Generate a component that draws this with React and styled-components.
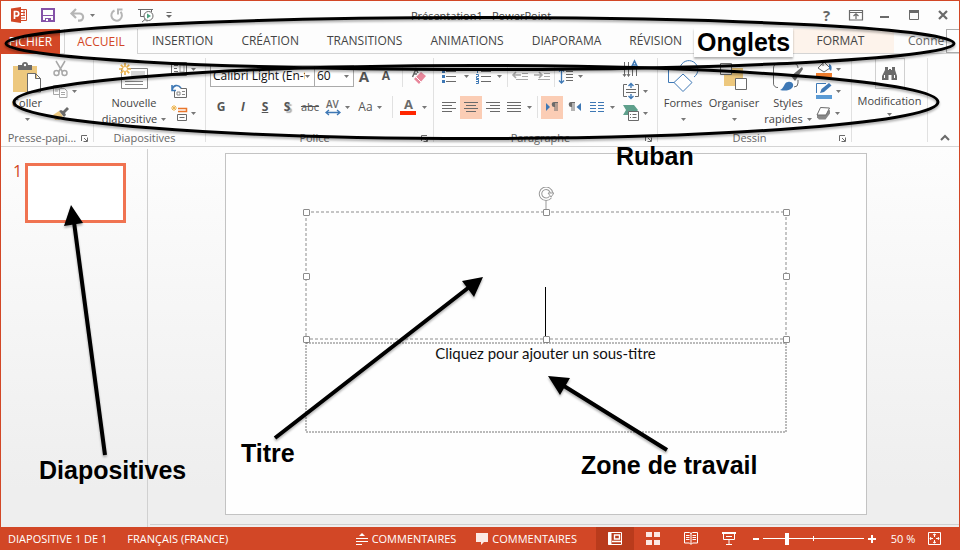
import React from "react";
import styled, { createGlobalStyle, css } from "styled-components";

const RED = "#d24726";
const GREY = "#6a6a6a";
const BLUE = "#3e78b5";

const GlobalStyle = createGlobalStyle`
  *, *::before, *::after { box-sizing: border-box; }
  body { margin: 0; font-family: "Open Sans", "Noto Sans", sans-serif; font-size: 11px; line-height: 16px; color: #444; }
  button, input, select { font: inherit; color: inherit; }
`;

const Window = styled.div`
  position: relative;
  display: flex;
  flex-direction: column;
  min-height: 100vh;
  border: 1px solid ${RED};
  border-bottom: 0;
  background: #fdfdfd;
  overflow: hidden;
`;

const reset = css`
  border: 0;
  padding: 0;
  background: none;
  display: inline-flex;
  align-items: center;
  justify-content: center;
`;

const TitleBar = styled.header`
  display: grid;
  grid-template-columns: 1fr auto 1fr;
  align-items: center;
  height: 28px;
  padding: 0 8px 0 10px;
`;
const Title = styled.h1`
  margin: 0;
  padding-top: 2px;
  font: inherit;
`;
const QuickAccess = styled.div`
  display: flex;
  align-items: center;
`;
const QuickButton = styled.button`
  ${reset}
  width: ${(p) => p.$w || 16}px;
  height: 20px;
  margin-right: ${(p) => p.$after || 0}px;
`;
const WindowControls = styled.div`
  display: flex;
  justify-content: flex-end;
  gap: 12px;
`;
const ControlButton = styled.button`
  ${reset}
  width: 17px;
  height: 20px;
  font-size: 15px;
  font-weight: 700;
  color: #666;
`;

const TabBar = styled.nav`
  display: flex;
  height: 25px;
  border-bottom: 1px solid #d4d4d4;
  font-size: 12px;
`;
const Tab = styled.button`
  ${reset}
  height: 24px;
  margin-right: ${(p) => p.$after ?? 16}px;
  padding: 0 6px;
  white-space: nowrap;
`;
const FileTab = styled(Tab)`
  width: 59px;
  height: 25px;
  color: #fff;
  background: ${RED};
`;
const ActiveTab = styled(Tab)`
  width: 74px;
  height: 25px;
  color: ${RED};
  background: #fdfdfd;
  border: 1px solid #d4d4d4;
  border-width: 0 1px;
`;
const ContextTab = styled(Tab)`
  width: 107px;
  margin-left: auto;
  background: #fdf3eb;
`;
const SignIn = styled.a`
  display: flex;
  align-items: center;
  width: 38px;
  color: #666;
  text-decoration: none;
`;
const Avatar = styled.button`
  ${reset}
  width: 13px;
  border: 1px solid #ababab;
  border-right: 0;
  background: #fdfdfd;
`;

const Ribbon = styled.section`
  display: grid;
  grid-template-columns: 93px 112px 228px 224px 194px 76px 1fr;
  height: 93px;
  padding: 4px 0;
  border-bottom: 1px solid #d4d4d4;
`;
const Group = styled.div`
  display: flex;
  flex-direction: column;
  min-width: 0;
  border-right: 1px solid #e1e1e1;
`;
const GroupBody = styled.div`
  display: flex;
  flex: 1;
  padding: 0 ${(p) => p.$pad || 4}px;
  gap: ${(p) => p.$gap || 0}px;
`;
const GroupFooter = styled.div`
  display: grid;
  grid-template-columns: 1fr 14px;
  align-items: center;
  height: 8px;
  padding: 0 0 0 4px;
  color: #666;
  text-align: center;
  white-space: nowrap;
`;
const GroupTitle = styled.span`
  margin: -4px 0;
`;
const Launcher = styled.button`
  ${reset}
  width: 10px;
  height: 8px;
`;
const BigButton = styled.button`
  ${reset}
  flex-direction: column;
  justify-content: flex-start;
  width: ${(p) => p.$w}px;
  white-space: nowrap;
`;
const BigIcon = styled.span`
  display: flex;
  align-items: center;
  justify-content: center;
  height: 37px;
`;
const BigLabel = styled.span`
  display: flex;
  align-items: center;
  gap: 4px;
  height: 16px;
`;
const SmallColumn = styled.div`
  display: flex;
  flex-direction: column;
`;
const SmallButton = styled.button`
  ${reset}
  justify-content: flex-start;
  gap: 4px;
  height: 22px;
  padding-left: 1px;
`;
const Rows = styled.div`
  display: flex;
  flex-direction: column;
`;
const Row = styled.div`
  display: flex;
  align-items: center;
  height: ${(p) => p.$h}px;
`;
const Tool = styled.button`
  ${reset}
  flex-shrink: 0;
  width: ${(p) => p.$w || 22}px;
  height: 23px;
  gap: ${(p) => p.$gap || 4}px;
  background: ${(p) => (p.$on ? "#fbcdb5" : "transparent")};
  font-size: ${(p) => p.$size || 12}px;
  font-weight: ${(p) => (p.$bold ? 700 : 400)};
  font-style: ${(p) => (p.$italic ? "italic" : "normal")};
  text-decoration: ${(p) => p.$line || "none"};
  text-shadow: ${(p) => (p.$shadow ? "2px 2px 1px #aaa" : "none")};
  color: #555;
`;
const Rule = styled.span`
  width: 1px;
  height: 22px;
  margin: 0 ${(p) => p.$m || 6}px;
  background: #e1e1e1;
`;
const Combo = styled.label`
  display: flex;
  align-items: center;
  width: ${(p) => p.$w}px;
  height: 22px;
  margin-right: -1px;
  padding: 0 4px 0 2px;
  border: 1px solid #ababab;
  background: #fff;
  color: #111;
  font-size: 12px;
`;
const ComboInput = styled.input`
  flex: 1;
  min-width: 0;
  padding: 0;
  border: 0;
  outline: 0;
  background: none;
`;
const FindBox = styled.span`
  display: flex;
  align-items: center;
  justify-content: center;
  width: 30px;
  height: 31px;
  border: 1px solid #d0d0d0;
`;
const FindButton = styled(BigButton)`
  gap: 4px;
`;
const CollapseButton = styled.button`
  ${reset}
  align-self: end;
  justify-self: end;
  width: 28px;
  height: 8px;
`;

const Workspace = styled.main`
  display: flex;
  flex: 1;
  padding-top: 2px;
  background: linear-gradient(#fdfdfd, #eeeeee 90%);
`;
const Thumbnails = styled.aside`
  display: flex;
  align-items: flex-start;
  gap: 4px;
  width: 147px;
  padding: 14px 0 0 12px;
  border-right: 1px solid #d0d0d0;
`;
const ThumbNumber = styled.span`
  width: 8px;
  font-family: "Open Sans", sans-serif;
  font-size: 16px;
  color: ${RED};
`;
const Thumb = styled.button`
  width: 101px;
  height: 60px;
  padding: 0;
  border: 3px solid #f07351;
  background: #fff;
`;
const Stage = styled.section`
  display: flex;
  flex: 1;
  flex-direction: column;
  align-items: center;
  margin: 0 0 2px 2px;
  padding: 4px 18px 9px 0;
  border-bottom: 1px solid #d0d0d0;
`;
const Slide = styled.article`
  display: flex;
  flex-direction: column;
  align-items: center;
  gap: 4px;
  width: 642px;
  max-width: 100%;
  height: 362px;
  padding-top: 58px;
  border: 1px solid #c3c3c3;
  background: #fefefe;
`;
const Placeholder = styled.div`
  position: relative;
  display: flex;
  justify-content: center;
  width: 75%;
  height: ${(p) => p.$h}px;
  color: #111;
  font-family: Lato, "Open Sans", sans-serif;
  font-size: 15px;
  line-height: 20px;
`;
const Outline = styled.svg`
  position: absolute;
  inset: 0;
  width: 100%;
  height: 100%;
  overflow: visible;
`;
const Caret = styled.span`
  align-self: flex-end;
  width: 1px;
  height: 49px;
  margin-bottom: 3px;
  background: #000;
`;
const Handle = styled.span`
  position: absolute;
  left: ${(p) => p.$x}%;
  top: ${(p) => p.$y}%;
  width: 7px;
  height: 7px;
  margin: -3px;
  border: 1px solid #8c8c8c;
  border-radius: 1px;
  background: #fff;
`;
const RotateHandle = styled.svg`
  position: absolute;
  left: 50%;
  bottom: 100%;
  margin: 0 -8px 1px;
`;

const StatusBar = styled.footer`
  display: flex;
  align-items: center;
  height: 23px;
  margin: 0 -1px;
  padding: 0 18px 0 8px;
  background: ${RED};
  color: #fff;
  white-space: nowrap;
`;
const StatusText = styled.button`
  ${reset}
  gap: 4px;
  margin-right: ${(p) => p.$after || 20}px;
`;
const StatusRight = styled.div`
  display: flex;
  align-items: center;
  margin-left: auto;
  height: 100%;
`;
const ViewButton = styled.button`
  ${reset}
  width: 38px;
  height: 100%;
  background: ${(p) => (p.$on ? "#b93b1c" : "transparent")};
`;
const ZoomStep = styled.button`
  ${reset}
  width: 15px;
  height: 16px;
`;
const ZoomRange = styled.input`
  appearance: none;
  width: 101px;
  height: 14px;
  margin: 0;
  background:
    linear-gradient(#fff, #fff) center / 1px 5px no-repeat,
    linear-gradient(#fff, #fff) center / 100% 1px no-repeat;
  &::-webkit-slider-thumb {
    appearance: none;
    width: 4px;
    height: 12px;
    background: #fff;
  }
`;
const ZoomValue = styled.button`
  ${reset}
  width: 48px;
  height: 16px;
`;

const Annotations = styled.div`
  position: absolute;
  inset: -1px 0 0 -1px;
  pointer-events: none;
`;
const Marks = styled.svg`
  position: absolute;
  inset: 0;
  filter: drop-shadow(0 2px 1px rgba(0, 0, 0, 0.3));
`;
const Note = styled.span`
  position: absolute;
  left: ${(p) => p.$x}px;
  top: ${(p) => p.$y}px;
  color: #000;
  font: 700 25px/29px "Liberation Sans", Arial, sans-serif;
  white-space: nowrap;
`;
const BoxedNote = styled(Note)`
  padding: 0 3px;
  background: #fff;
  box-shadow: 0 2px 2px rgba(0, 0, 0, 0.3);
`;

const Svg = ({ w, h, children, ...rest }) => (
  <svg width={w} height={h} viewBox={`0 0 ${w} ${h}`} fill="none" stroke={GREY} overflow="visible" aria-hidden="true" {...rest}>
    {children}
  </svg>
);
const Arrow = () => (
  <Svg w={5} h={3} stroke="none" fill="#777"><path d="M0 0h5L2.5 3z" /></Svg>
);

const Logo = () => (
  <Svg w={17} h={16} stroke="none" fill={RED}>
    <path d="M9 2.500h6.500v11H9" fill="#fff" stroke={RED} />
    <path d="M10 5.500h4M10 8.500h4M10 11h4M13 3v5" stroke={RED} />
    <path d="M0 1.500 10 0v16L0 14.500z" />
    <path d="M3.500 12V4.500h2a2.200 2.200 0 0 1 0 4.500h-2" stroke="#fff" strokeWidth="1.700" fill="none" />
  </Svg>
);
const Save = () => (
  <Svg w={14} h={14} stroke="#8552a8">
    <path d="M1 1h12v12H1z" strokeWidth="2" />
    <path d="M2 7h10v1H2zM4 10h6v4H4z" fill="#8552a8" stroke="none" />
    <path d="M5 11h2v2H5z" fill="#fff" stroke="none" />
  </Svg>
);
const Undo = () => (
  <Svg w={15} h={14} stroke="#b5b5b5" strokeWidth="2.200">
    <path d="M2 5.500h7.500a3.600 3.600 0 0 1 0 7.200H8M6 1 1.500 5.500 6 10" />
  </Svg>
);
const Redo = () => (
  <Svg w={14} h={14} stroke="#b5b5b5" strokeWidth="2">
    <path d="M4.500 2.500a5.300 5.300 0 1 0 6 1.200M12.500 1.500H8v5" />
  </Svg>
);
const Show = () => (
  <Svg w={16} h={15}>
    <path d="M0 1.500h15M2.500 2v6.500h4M7 9v2.500M4 14l3-2.500 2 2M13.500 2v2" />
    <circle cx="10.500" cy="8" r="4.500" fill="#fff" />
    <path d="M9 5.500 13 8l-4 2.500z" fill="#4aa37f" stroke="none" />
  </Svg>
);
const Customize = () => (
  <Svg w={6} h={6}><path d="M.5.5h5" /><path d="M0 3h6L3 6z" fill={GREY} stroke="none" /></Svg>
);
const RibbonOptions = () => (
  <Svg w={14} h={12}><path d="M.5 1.500h13v9.500H.5zM.5 3.500h13M7 10V5M4.500 7 7 4.800 9.500 7" strokeWidth="1.200" /></Svg>
);
const Minimize = () => <Svg w={10} h={12}><path d="M0 8h9" strokeWidth="2" /></Svg>;
const Maximize = () => (
  <Svg w={10} h={12}><path d="M.5 1.500h9v9h-9z" /><path d="M0 2.500h10" strokeWidth="3" /></Svg>
);
const Close = () => <Svg w={10} h={12}><path d="m1 2 8 8M9 2l-8 8" strokeWidth="2.200" /></Svg>;
const LaunchIcon = () => (
  <Svg w={7} h={7}><path d="M.5 6V.5H6M3 3l3 3M6.500 2.500v4h-4" /></Svg>
);

const Paste = () => (
  <Svg w={29} h={30}>
    <path d="M0 4h24v26H0z" fill="#edc87e" stroke="none" />
    <path d="M5 3h4a3 3 0 0 1 6 0h4v5H5z" fill={GREY} stroke="none" />
    <circle cx="12" cy="3" r="1.200" fill="#fff" stroke="none" />
    <path d="M14.500 11.500h8l5 5V30h-13zM22.500 11.500v5h5" fill="#fff" />
  </Svg>
);
const Cut = () => (
  <Svg w={15} h={16} stroke="#a8a8a8" strokeWidth="1.500">
    <path d="M3 0l6.500 11M12 0 5.500 11" /><circle cx="3.500" cy="12" r="2.500" /><circle cx="11.500" cy="12" r="2.500" />
  </Svg>
);
const Copy = () => (
  <Svg w={15} h={13} stroke="#a8a8a8">
    <path d="M.5.5h6l2 2v7h-8zM2 4h4M2 6h3" /><path d="M6.500 3.500h5l2.500 2.500v6.500H6.500zM8 7.500h4M8 9.500h4" fill="#fff" />
  </Svg>
);
const Brush = () => (
  <Svg w={16} h={13} stroke="none">
    <path d="M0 8l6-4 4 5-4 4H2z" fill="#edc87e" /><path d="m6 4 2-1 2 1 4-4 2 2-4 4 1 2-2 2z" fill={GREY} />
  </Svg>
);
const NewSlide = () => (
  <Svg w={30} h={27}>
    <path d="M2.500 5.500h26v20h-26z" fill="#fff" stroke="#888" /><path d="M12 8h14v7H12z" fill="#d5d5d5" stroke="none" />
    <path d="M6 18.500h18M6 21.500h18" stroke="#888" />
    <path d="M6 0v12M0 6h12M1.800 1.800l8.400 8.400M10.200 1.800l-8.400 8.400" stroke="#edb44e" strokeWidth="1.700" />
    <circle cx="6" cy="6" r="2" fill="#fff" stroke="none" />
  </Svg>
);
const Layout = () => (
  <Svg w={16} h={14}><path d="M.5.500h15v13H.5z" /><path d="M3 3.500h4M3 6.500h3M3 9.500h4" /><path d="M9 3h4v7H9z" stroke="#999" /></Svg>
);
const ResetIcon = () => (
  <Svg w={16} h={14}>
    <path d="M3.500 6v7.500h12v-9h-6" /><path d="M6 8h3v3H6zM11 7.500h3M11 10.500h3" stroke="#888" />
    <path d="M1 6c1-5 6-6 9-2M1 1v5.500h4" stroke={BLUE} strokeWidth="1.600" />
  </Svg>
);
const Section = () => (
  <Svg w={16} h={16}>
    <path d="M7 3.500h8.500v3H7" stroke="#e9762b" strokeWidth="1.500" />
    <path d="M6.500 9.500h9v6h-9zM8.500 12.500h5" />
    <path d="M3 0v6M0 3h6M1 1l4 4M5 1 1 5" stroke="#edb44e" />
  </Svg>
);
const Eraser = () => (
  <Svg w={15} h={16} stroke="none">
    <path d="M.5 9 4 1l2 4M2 6h3" stroke={GREY} strokeWidth="1.500" />
    <path d="m2 11 7-7 5 4-7 8z" fill="#e8879b" /><path d="m4 9 5 5" stroke="#fff" />
  </Svg>
);
const Spacing = () => (
  <Svg w={16} h={15} stroke={BLUE}>
    <text x="1" y="8" fontSize="10" fontWeight="600" fill={GREY} stroke="none" fontFamily="Open Sans">AV</text>
    <path d="M1 12.500h14M4 10l-3 2.500L4 15M12 10l3 2.500-3 2.500" strokeWidth="1.300" />
  </Svg>
);
const FontColor = () => (
  <Svg w={16} h={16} stroke="none">
    <text x="4" y="10" fontSize="13" fontWeight="700" fill={GREY} fontFamily="Open Sans">A</text>
    <path d="M0 12h16v4H0z" fill="#ff2600" />
  </Svg>
);
const Bullets = () => (
  <Svg w={14} h={16}>
    <path d="M4 3.500h10M4 8.500h10M4 13.500h10" /><path d="M0 2h3v3H0zM0 7h3v3H0zM0 12h3v3H0z" fill={BLUE} stroke="none" />
  </Svg>
);
const Numbering = () => (
  <Svg w={15} h={16}>
    <path d="M5 3.500h10M5 8.500h10M5 13.500h10" />
    <path d="M0 .5h1.500V5M0 6.500h2.500v2H.5v2H3M0 11.500h2.500v4H0M0 13.500h2.500" stroke={BLUE} />
  </Svg>
);
const Indent = ({ out }) => (
  <Svg w={16} h={14} stroke="#a8a8a8">
    <path d="M4 1.500h12M10 4.500h6M10 7.500h6M4 10.500h12" />
    <path d={out ? "M1 6h8M4 3 1 6l3 3" : "M0 6h8M5 3l3 3-3 3"} strokeWidth="1.600" />
  </Svg>
);
const LineSpacing = () => (
  <Svg w={15} h={16}>
    <path d="M7 3.500h7M7 6.500h7M7 9.500h7M7 12.500h7" />
    <path d="M2.500 1v14M0 3.500 2.500 1 5 3.500M0 12.500 2.500 15 5 12.500" stroke={BLUE} strokeWidth="1.300" />
  </Svg>
);
const Align = ({ kind }) => {
  const d = {
    left: "M0 .5h14M0 3.500h10M0 6.500h14M0 9.500h10",
    center: "M0 .5h14M2 3.500h10M0 6.500h14M2 9.500h10",
    right: "M0 .5h14M4 3.500h10M0 6.500h14M4 9.500h10",
    justify: "M0 .5h14M0 3.500h14M0 6.500h14M0 9.500h14",
  }[kind];
  return <Svg w={14} h={10}><path d={d} /></Svg>;
};
const Direction = ({ rtl }) => (
  <Svg w={13} h={10} stroke="none">
    <path d={rtl ? "M13 1v8L8.500 5z" : "M0 1v8l4-4z"} fill={BLUE} />
    <path transform={rtl ? undefined : "translate(5)"} d="M3 0h4v1H6.500v8h-1V1H4.500v8h-1V5a2.500 2.500 0 0 1-.5-5z" fill={GREY} />
  </Svg>
);
const Columns = () => (
  <Svg w={14} h={10} stroke={BLUE}><path d="M0 .5h6M8 .5h6M0 3.500h6M8 3.500h6M0 6.500h6M8 6.500h6M0 9.500h6M8 9.500h6" /></Svg>
);
const TextDirection = () => (
  <Svg w={16} h={17}>
    <path d="M1.500 1v14M5.500 1v14M9.500 8v7M13.500 8v7M0 13l1.500 2.500L3 13M4 13l1.500 2.500L7 13" />
    <path d="m8.500 6 3-6 3 6M9.500 4h4" stroke={BLUE} strokeWidth="1.500" />
  </Svg>
);
const AlignText = () => (
  <Svg w={16} h={16}>
    <path d="M4 1.500H.5v12H4M12 1.500h3.500v12H12M3 6.500h10M3 9.500h10" />
    <path d="M8 1v4M5.500 3 8 .5 10.500 3M8 11v4M5.500 13 8 15.500 10.500 13" stroke={BLUE} strokeWidth="1.400" />
  </Svg>
);
const SmartArt = () => (
  <Svg w={16} h={16}>
    <path d="M0 0h11l4 5-4 5H0l3-5z" fill="#5fa08c" stroke="none" />
    <path d="M5.500 6.500h10v9h-10z" fill="#fff" /><path d="M7 9.500h1M9.500 9.500h4M7 12.500h1M9.500 12.500h4" />
  </Svg>
);
const Shapes = () => (
  <Svg w={30} h={30} stroke={BLUE}>
    <path d="M8 20.500H.5v-16H12M12 6a9 9 0 1 1 14 9" /><path d="m15 12 9 8.500-9 9-9-9z" fill="#fff" />
  </Svg>
);
const Arrange = () => (
  <Svg w={28} h={28}>
    <path d="M4 5h19v18H4z" fill="#edc87e" stroke="none" />
    <path d="M.5.500h11v11H.5zM15.500 15.500h11v11h-11z" fill="#fff" />
  </Svg>
);
const Styles = () => (
  <Svg w={30} h={30}>
    <path d="M5 25.500A4 4 0 0 1 .5 21V6a5 5 0 0 1 5-5H20a5 5 0 0 1 5 5M25 18v3a4 4 0 0 1-4 4" />
    <path d="m29 5-11 9 4 5 8-12z" fill={GREY} stroke="none" />
    <path d="M7 28c4-1 4-8 8-8 4-1 7 3 4 6-3 3-8 3-12 2z" fill={BLUE} stroke="none" />
  </Svg>
);
const Fill = () => (
  <Svg w={16} h={16}>
    <path d="m2 7 6-6 6 6-6 4z" fill="#fff" /><path d="M13 3c3 1 3 4 2 7l-2-2z" fill={BLUE} stroke="none" /><path d="M7 0v5" />
    <path d="M0 12h16v4H0z" fill="#ee7d2e" stroke="none" />
  </Svg>
);
const Pen = () => (
  <Svg w={16} h={16}>
    <path d="M10 .5H.5V10" stroke={BLUE} /><path d="m4 10 1.500-4L13 0l2.500 2.500L8 9z" fill={BLUE} stroke="none" />
    <path d="M0 12h16v4H0z" fill="#5b9bd5" stroke="none" />
  </Svg>
);
const Effects = () => (
  <Svg w={15} h={13}>
    <path d="M1 7v3.500L3 12.500h6.500l4.500-6V3z" fill="#888" stroke="none" /><path d="m4.500.5 9 .5-3.500 7L1 8z" fill="#fff" />
  </Svg>
);
const Binoculars = () => (
  <Svg w={16} h={14} stroke="none" fill={GREY}>
    <path d="M3 0h3v3h1V2h2v1h1V0h3v3l2 6v4H9.500V8h-3v5H0V9l3-6z" /><path d="M2 8h1v3H2zM12 8h1v3h-1z" fill="#fff" />
  </Svg>
);
const Notes = () => (
  <Svg w={12} h={12} stroke="#fff"><path d="M6 0 9 3H3z" fill="#fff" stroke="none" /><path d="M0 5.500h12M0 8.500h12M0 11.500h6" /></Svg>
);
const Comment = () => (
  <Svg w={12} h={12} stroke="none"><path d="M0 0h12v9H8l-3 3V9H0z" fill="#fce9e4" /></Svg>
);
const NormalView = () => (
  <Svg w={14} h={13} stroke="#fff"><path d="M.5.500h13v12H.5z" /><path d="M2 0v13" strokeWidth="3" /><path d="M6.500 3h5v4h-5zM4 9.500h10" strokeWidth="1.400" /></Svg>
);
const SorterView = () => (
  <Svg w={14} h={13} stroke="none" fill="#fce9e4"><path d="M0 0h6v5H0zM8 0h6v5H8zM0 8h6v5H0zM8 8h6v5H8z" /></Svg>
);
const ReadingView = () => (
  <Svg w={14} h={13} stroke="#fff"><path d="M.5.500h5l1.500 1 1.500-1h5v10.500h-5L7 12.500 5.500 11h-5zM7 1v11M2 3.500h3.500M2 5.500h3.500M2 7.500h3.500M8.500 3.500H12M8.500 5.500H12M8.500 7.500H12" /></Svg>
);
const ShowView = () => (
  <Svg w={14} h={13} stroke="#fff"><path d="M0 1h14" strokeWidth="2" /><path d="M1.500 2v5.500h11V2M4 4.500h6M7 8v4M4 12.500h6" /></Svg>
);
const Minus = () => <Svg w={6} h={8} stroke="#fff"><path d="M0 4h6" strokeWidth="2" /></Svg>;
const Plus = () => <Svg w={8} h={8} stroke="#fff"><path d="M0 4h8M4 0v8" strokeWidth="2" /></Svg>;
const Fit = () => (
  <Svg w={13} h={13} stroke="#fff">
    <path d="M.5.500h12v12H.5zM6.500 2v3M6.500 8v3M2 6.500h3M8 6.500h3M5 3l1.500-1L8 3M5 10l1.500 1L8 10M3 5 2 6.500 3 8M10 5l1 1.500L10 8" />
  </Svg>
);

const Footer = ({ title, launcher }) => (
  <GroupFooter>
    <GroupTitle>{title}</GroupTitle>
    {launcher && <Launcher aria-label={`Options ${title}`}><LaunchIcon /></Launcher>}
  </GroupFooter>
);

const TABS = ["INSERTION", "CRÉATION", "TRANSITIONS", "ANIMATIONS", "DIAPORAMA", "RÉVISION"];
const HANDLES = [[0, 0], [50, 0], [100, 0], [0, 50], [100, 50], [0, 100], [50, 100], [100, 100]];

export default function App() {
  return (
    <Window>
      <GlobalStyle />
      <TitleBar>
        <QuickAccess>
          <QuickButton $w={17} $after={13} aria-label="PowerPoint"><Logo /></QuickButton>
          <QuickButton $w={14} $after={15} aria-label="Enregistrer"><Save /></QuickButton>
          <QuickButton $w={15} $after={5} aria-label="Annuler"><Undo /></QuickButton>
          <QuickButton $w={5} $after={15} aria-label="Historique"><Arrow /></QuickButton>
          <QuickButton $w={14} $after={14} aria-label="Répéter"><Redo /></QuickButton>
          <QuickButton $w={16} $after={12} aria-label="Diaporama"><Show /></QuickButton>
          <QuickButton $w={6} aria-label="Personnaliser"><Customize /></QuickButton>
        </QuickAccess>
        <Title>Présentation1 - PowerPoint</Title>
        <WindowControls>
          <ControlButton aria-label="Aide">?</ControlButton>
          <ControlButton aria-label="Options du ruban"><RibbonOptions /></ControlButton>
          <ControlButton aria-label="Réduire"><Minimize /></ControlButton>
          <ControlButton aria-label="Agrandir"><Maximize /></ControlButton>
          <ControlButton aria-label="Fermer"><Close /></ControlButton>
        </WindowControls>
      </TitleBar>

      <TabBar>
        <FileTab $after={4}>FICHIER</FileTab>
        <ActiveTab $after={8}>ACCUEIL</ActiveTab>
        {TABS.map((t) => <Tab key={t}>{t}</Tab>)}
        <ContextTab $after={14}>FORMAT</ContextTab>
        <SignIn href="#">Conne</SignIn>
        <Avatar aria-label="Compte" />
      </TabBar>

      <Ribbon>
        <Group>
          <GroupBody $pad={1}>
            <BigButton $w={50}>
              <BigIcon><Paste /></BigIcon>
              <BigLabel>Coller</BigLabel>
              <BigLabel><Arrow /></BigLabel>
            </BigButton>
            <SmallColumn>
              <SmallButton aria-label="Couper"><Cut /></SmallButton>
              <SmallButton aria-label="Copier"><Copy /><Arrow /></SmallButton>
              <SmallButton aria-label="Reproduire la mise en forme"><Brush /></SmallButton>
            </SmallColumn>
          </GroupBody>
          <Footer title="Presse-papi..." launcher />
        </Group>

        <Group>
          <GroupBody>
            <BigButton $w={72}>
              <BigIcon><NewSlide /></BigIcon>
              <BigLabel>Nouvelle</BigLabel>
              <BigLabel>diapositive <Arrow /></BigLabel>
            </BigButton>
            <SmallColumn>
              <SmallButton aria-label="Disposition"><Layout /><Arrow /></SmallButton>
              <SmallButton aria-label="Rétablir"><ResetIcon /></SmallButton>
              <SmallButton aria-label="Section"><Section /><Arrow /></SmallButton>
            </SmallColumn>
          </GroupBody>
          <Footer title="Diapositives" />
        </Group>

        <Group>
          <GroupBody>
            <Rows>
              <Row $h={36}>
                <Combo $w={105}><ComboInput aria-label="Police" defaultValue="Calibri Light (En-têtes)" /><Arrow /></Combo>
                <Combo $w={40}><ComboInput aria-label="Taille" defaultValue="60" /><Arrow /></Combo>
                <Tool $size={15} $bold>A</Tool>
                <Tool $size={12} $bold>A</Tool>
                <Rule $m={5} />
                <Tool aria-label="Effacer la mise en forme"><Eraser /></Tool>
              </Row>
              <Row $h={26}>
                <Tool $bold>G</Tool>
                <Tool $bold $italic>I</Tool>
                <Tool $bold $line="underline">S</Tool>
                <Tool $bold $shadow>S</Tool>
                <Tool $w={24} $size={11} $line="line-through">abc</Tool>
                <Tool $w={30} aria-label="Espacement"><Spacing /><Arrow /></Tool>
                <Tool $w={36}>Aa<Arrow /></Tool>
                <Rule $m={4} />
                <Tool $w={32} $gap={6} aria-label="Couleur de police"><FontColor /><Arrow /></Tool>
              </Row>
            </Rows>
          </GroupBody>
          <Footer title="Police" launcher />
        </Group>

        <Group>
          <GroupBody $gap={3}>
            <Rows>
              <Row $h={36}>
                <Tool $w={34} $gap={8} aria-label="Puces"><Bullets /><Arrow /></Tool>
                <Tool $w={34} $gap={6} aria-label="Numérotation"><Numbering /><Arrow /></Tool>
                <Rule $m={1} />
                <Tool aria-label="Réduire le retrait"><Indent out /></Tool>
                <Tool aria-label="Augmenter le retrait"><Indent /></Tool>
                <Rule $m={1} />
                <Tool $w={30} aria-label="Interligne"><LineSpacing /><Arrow /></Tool>
              </Row>
              <Row $h={26}>
                <Tool aria-label="Aligner à gauche"><Align kind="left" /></Tool>
                <Tool $on aria-label="Centrer"><Align kind="center" /></Tool>
                <Tool aria-label="Aligner à droite"><Align kind="right" /></Tool>
                <Tool $w={30} $gap={6} aria-label="Justifier"><Align kind="justify" /><Arrow /></Tool>
                <Rule $m={3} />
                <Tool $on aria-label="De gauche à droite"><Direction /></Tool>
                <Tool aria-label="De droite à gauche"><Direction rtl /></Tool>
                <Tool $w={34} $gap={6} aria-label="Colonnes"><Columns /><Arrow /></Tool>
              </Row>
            </Rows>
            <SmallColumn>
              <SmallButton aria-label="Orientation du texte"><TextDirection /></SmallButton>
              <SmallButton aria-label="Aligner le texte"><AlignText /><Arrow /></SmallButton>
              <SmallButton aria-label="SmartArt"><SmartArt /><Arrow /></SmallButton>
            </SmallColumn>
          </GroupBody>
          <Footer title="Paragraphe" launcher />
        </Group>

        <Group>
          <GroupBody $pad={1}>
            <BigButton $w={48}>
              <BigIcon><Shapes /></BigIcon>
              <BigLabel>Formes</BigLabel>
              <BigLabel><Arrow /></BigLabel>
            </BigButton>
            <BigButton $w={54}>
              <BigIcon><Arrange /></BigIcon>
              <BigLabel>Organiser</BigLabel>
              <BigLabel><Arrow /></BigLabel>
            </BigButton>
            <BigButton $w={54}>
              <BigIcon><Styles /></BigIcon>
              <BigLabel>Styles</BigLabel>
              <BigLabel>rapides <Arrow /></BigLabel>
            </BigButton>
            <SmallColumn>
              <SmallButton aria-label="Remplissage"><Fill /><Arrow /></SmallButton>
              <SmallButton aria-label="Contour"><Pen /><Arrow /></SmallButton>
              <SmallButton aria-label="Effets"><Effects /><Arrow /></SmallButton>
            </SmallColumn>
          </GroupBody>
          <Footer title="Dessin" launcher />
        </Group>

        <Group>
          <GroupBody>
            <FindButton $w={67}>
              <FindBox><Binoculars /></FindBox>
              <BigLabel>Modification</BigLabel>
              <Arrow />
            </FindButton>
          </GroupBody>
        </Group>

        <CollapseButton aria-label="Réduire le ruban">
          <Svg w={10} h={6}><path d="m1 5 4-4 4 4" strokeWidth="2" /></Svg>
        </CollapseButton>
      </Ribbon>

      <Workspace>
        <Thumbnails>
          <ThumbNumber>1</ThumbNumber>
          <Thumb aria-label="Diapositive 1" />
        </Thumbnails>
        <Stage>
          <Slide>
            <Placeholder $h={127}>
              <Outline><rect width="100%" height="100%" fill="none" stroke="#8c8c8c" strokeDasharray="3 2" /></Outline>
              <RotateHandle width="16" height="24" viewBox="0 0 16 24" fill="none" stroke="#999">
                <path d="M8 14v10" />
                <path d="M12.500 10a5.500 5.500 0 1 1 1-4" stroke="#999" strokeWidth="3.500" />
                <path d="M12.500 10a5.500 5.500 0 1 1 1-4" stroke="#fff" strokeWidth="1.500" />
                <path d="M10 6h6l-3 4z" fill="#fff" stroke="#999" />
              </RotateHandle>
              <Caret />
              {HANDLES.map(([x, y]) => <Handle key={`${x}-${y}`} $x={x} $y={y} />)}
            </Placeholder>
            <Placeholder $h={89}>
              <Outline><rect width="100%" height="100%" fill="none" stroke="#777" strokeDasharray="2 1" /></Outline>
              Cliquez pour ajouter un sous-titre
            </Placeholder>
          </Slide>
        </Stage>
      </Workspace>

      <StatusBar>
        <StatusText>DIAPOSITIVE 1 DE 1</StatusText>
        <StatusText>FRANÇAIS (FRANCE)</StatusText>
        <StatusRight>
          <StatusText><Notes />COMMENTAIRES</StatusText>
          <StatusText $after={19}><Comment />COMMENTAIRES</StatusText>
          <ViewButton $on aria-label="Normal"><NormalView /></ViewButton>
          <ViewButton aria-label="Trieuse"><SorterView /></ViewButton>
          <ViewButton aria-label="Lecture"><ReadingView /></ViewButton>
          <ViewButton aria-label="Diaporama"><ShowView /></ViewButton>
          <ZoomStep aria-label="Zoom arrière"><Minus /></ZoomStep>
          <ZoomRange type="range" aria-label="Zoom" defaultValue="23" />
          <ZoomStep aria-label="Zoom avant"><Plus /></ZoomStep>
          <ZoomValue>50 %</ZoomValue>
          <ZoomStep aria-label="Ajuster"><Fit /></ZoomStep>
        </StatusRight>
      </StatusBar>

      <Annotations>
        <Marks width="960" height="550" viewBox="0 0 960 550" fill="none" stroke="#000" aria-hidden="true">
          <ellipse cx="480" cy="43.500" rx="474" ry="26" strokeWidth="3" />
          <ellipse cx="476" cy="102" rx="462" ry="36.500" strokeWidth="3" />
          <path d="M105 455 74 222M275 438l193-150M667 450 564 386" strokeWidth="4" />
          <path d="M71 205l12 18-19 3zM483 277l-9 20-12-16zM548 376l22 2-10 17z" fill="#000" stroke="none" />
        </Marks>
        <BoxedNote $x={694} $y={28}>Onglets</BoxedNote>
        <Note $x={616} $y={142}>Ruban</Note>
        <Note $x={241} $y={439}>Titre</Note>
        <Note $x={39} $y={456}>Diapositives</Note>
        <Note $x={581} $y={451}>Zone de travail</Note>
      </Annotations>
    </Window>
  );
}
